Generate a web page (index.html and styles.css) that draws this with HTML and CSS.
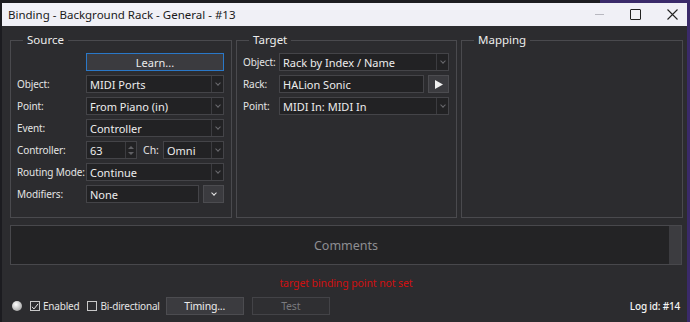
FILE: index.html
```html
<!DOCTYPE html>
<html>
<head>
    <meta charset="utf-8" />
    <title>Binding</title>
    <link rel="stylesheet" href="styles.css">
</head>
<body>
    <div class="window">
        <div class="titlebar">
            <span class="title">Binding - Background Rack - General - #13</span>
            <div class="winbtns">
                <span class="wb wbMin"></span>
                <span class="wb wbMax"></span>
                <span class="wb wbClose">
                    <svg width="11" height="11" viewBox="0 0 11 11"><path d="M0.5 0.5L10.5 10.5M10.5 0.5L0.5 10.5" stroke="#222" stroke-width="1.1" /></svg>
                </span>
            </div>
        </div>

        <div class="content">
            <div class="groups">
                <fieldset class="group">
                    <legend>Source</legend>
                    <div class="rows">
                        <div class="row">
                            <span class="lbl"></span>
                            <div class="btn learn">Learn...</div>
                        </div>
                        <div class="row">
                            <span class="lbl">Object:</span>
                            <div class="combo"><span class="val">MIDI Ports</span><span class="drop"></span></div>
                        </div>
                        <div class="row">
                            <span class="lbl">Point:</span>
                            <div class="combo"><span class="val">From Piano (in)</span><span class="drop"></span></div>
                        </div>
                        <div class="row">
                            <span class="lbl">Event:</span>
                            <div class="combo"><span class="val">Controller</span><span class="drop"></span></div>
                        </div>
                        <div class="row">
                            <span class="lbl">Controller:</span>
                            <div class="spin"><span class="val">63</span><span class="spinArrows"><span class="up"></span><span class="down"></span></span></div>
                            <span class="chLbl">Ch:</span>
                            <div class="combo"><span class="val">Omni</span><span class="drop"></span></div>
                        </div>
                        <div class="row">
                            <span class="lbl">Routing Mode:</span>
                            <div class="combo"><span class="val">Continue</span><span class="drop"></span></div>
                        </div>
                        <div class="row">
                            <span class="lbl">Modifiers:</span>
                            <div class="input"><span class="val">None</span></div>
                            <div class="btn smallBtn"><span class="chev"></span></div>
                        </div>
                    </div>
                </fieldset>

                <fieldset class="group">
                    <legend>Target</legend>
                    <div class="rows">
                        <div class="row">
                            <span class="lbl lblT">Object:</span>
                            <div class="combo"><span class="val">Rack by Index / Name</span><span class="drop"></span></div>
                        </div>
                        <div class="row">
                            <span class="lbl lblT">Rack:</span>
                            <div class="input"><span class="val">HALion Sonic</span></div>
                            <div class="btn smallBtn">
                                <svg width="8" height="9" viewBox="0 0 8 9"><path d="M0 0L8 4.5L0 9Z" fill="#f0f0f0" /></svg>
                            </div>
                        </div>
                        <div class="row">
                            <span class="lbl lblT">Point:</span>
                            <div class="combo"><span class="val">MIDI In: MIDI In</span><span class="drop"></span></div>
                        </div>
                    </div>
                </fieldset>

                <fieldset class="group">
                    <legend>Mapping</legend>
                </fieldset>
            </div>

            <div class="comments">
                <span class="commentsText">Comments</span>
                <span class="scrollbar"></span>
            </div>

            <div class="error">target binding point not set</div>

            <div class="bottom">
                <span class="led"></span>
                <label class="check">
                    <span class="box">
                        <svg width="9" height="9" viewBox="0 0 9 9"><path d="M1 4.8L3.4 7.2L8 1.5" fill="none" stroke="#eee" stroke-width="1.1" /></svg>
                    </span>
                    Enabled
                </label>
                <label class="check checkLast"><span class="box"></span>Bi-directional</label>
                <div class="btn wideBtn">Timing...</div>
                <div class="btn wideBtn disabled">Test</div>
                <span class="logid">Log id: #14</span>
            </div>
        </div>
    </div>
</body>
</html>
```

FILE: styles.css
```css
* {
    margin: 0;
    padding: 0;
    box-sizing: border-box;
}

body {
    width: 690px;
    height: 322px;
    overflow: hidden;
    background: linear-gradient(to right, #1c1c20 0, #1c1c20 600px, #3a2a6a 600px);
    font-family: "Noto Sans", "Open Sans", sans-serif;
    font-size: 11px;
    color: #e4e4e4;
    padding: 3px 3px 0 2px;
}

.window {
    width: 685px;
    height: 319px;
    background: #2c2c2f;
    display: flex;
    flex-direction: column;
}

.titlebar {
    height: 23px;
    background: #f0f0f6;
    color: #1a1a1a;
    display: flex;
    align-items: center;
    padding-left: 6px;
    font-size: 11.5px;
}

.title {
    flex: 1;
}

.winbtns {
    display: flex;
    align-items: center;
}

.wb {
    width: 30px;
    height: 23px;
    display: flex;
    align-items: center;
    justify-content: center;
}

.wbMax {
    width: 43px;
}

.wbMin::before {
    content: "";
    width: 9px;
    height: 1px;
    background: #b8b8c0;
}

.wbMax::before {
    content: "";
    width: 9px;
    height: 9px;
    border: 1px solid #222;
    border-radius: 1px;
}

.content {
    flex: 1;
    padding: 7px 5px 0 8px;
    display: flex;
    flex-direction: column;
}

.groups {
    display: grid;
    grid-template-columns: 222px 221px 222px;
    gap: 4px;
    height: 185px;
}

.group {
    border: 1px solid #4a4a4e;
    padding: 0 7px 0 6px;
    min-width: 0;
}

.group legend {
    padding: 0 4px;
    margin-left: 6px;
    font-size: 11.5px;
    color: #ececec;
    line-height: 14px;
}

.rows {
    display: flex;
    flex-direction: column;
    gap: 4px;
    padding-top: 6px;
}

.row {
    display: flex;
    align-items: center;
    height: 18px;
}

.lbl {
    width: 69px;
    flex: none;
    white-space: nowrap;
    font-size: 10px;
    letter-spacing: -0.1px;
}

.lblT {
    width: 36px;
}

.combo, .input, .spin {
    flex: 1;
    height: 18px;
    background: #222224;
    border: 1px solid #444448;
    display: flex;
    align-items: center;
    min-width: 0;
}

.val {
    flex: 1;
    padding-left: 3px;
    white-space: nowrap;
    color: #ededed;
}

.drop {
    width: 12px;
    height: 100%;
    border-left: 1px solid #3c3c40;
    display: flex;
    align-items: center;
    justify-content: center;
}

.drop::before {
    content: "";
    width: 3px;
    height: 3px;
    border-right: 1px solid #6a6a6e;
    border-bottom: 1px solid #6a6a6e;
    transform: rotate(45deg);
    margin-top: -2px;
}

.spin {
    flex: none;
    width: 51px;
}

.spinArrows {
    width: 11px;
    height: 100%;
    border-left: 1px solid #3c3c40;
    display: flex;
    flex-direction: column;
    align-items: center;
    justify-content: center;
    gap: 3px;
}

.up, .down {
    width: 0;
    height: 0;
    border-left: 3px solid transparent;
    border-right: 3px solid transparent;
}

.up {
    border-bottom: 3px solid #606064;
}

.down {
    border-top: 3px solid #606064;
}

.chLbl {
    margin: 0 4px 0 6px;
    font-size: 10.5px;
}

.btn {
    background: #3b3b3f;
    border: 1px solid #4c4c50;
    display: flex;
    align-items: center;
    justify-content: center;
    color: #ececec;
}

.learn {
    flex: 1;
    height: 18px;
    border-color: #2a78c8;
}

.smallBtn {
    width: 21px;
    height: 18px;
    flex: none;
    margin-left: 4px;
}

.chev {
    width: 4px;
    height: 4px;
    border-right: 1px solid #e8e8e8;
    border-bottom: 1px solid #e8e8e8;
    transform: rotate(45deg);
    margin-top: -2px;
}

.comments {
    margin-top: 7px;
    height: 40px;
    width: 672px;
    background: #232325;
    border: 1px solid #48484c;
    display: flex;
    align-items: center;
}

.commentsText {
    flex: 1;
    text-align: center;
    font-size: 12.5px;
    color: #8e8e92;
    padding-left: 12px;
}

.scrollbar {
    width: 12px;
    height: 100%;
    background: #3c3c40;
}

.error {
    margin-top: 11px;
    text-align: center;
    color: #d01010;
    font-size: 10.5px;
    letter-spacing: -0.1px;
    width: 672px;
}

.bottom {
    margin-top: 7px;
    display: flex;
    align-items: center;
    height: 18px;
    width: 673px;
    padding-left: 2px;
    font-size: 10px;
    letter-spacing: -0.2px;
}

.led {
    width: 10px;
    height: 10px;
    border-radius: 50%;
    background: radial-gradient(circle at 40% 35%, #ffffff 0, #d8d8d8 35%, #8c8c8c 100%);
    margin-right: 8px;
}

.check {
    display: flex;
    align-items: center;
    gap: 3px;
    margin-right: 8px;
}

.checkLast {
    margin-right: 6px;
}

.box {
    width: 10px;
    height: 10px;
    border: 1px solid #c8c8c8;
    display: flex;
    align-items: center;
    justify-content: center;
}

.wideBtn {
    width: 78px;
    height: 18px;
    margin-right: 8px;
    font-size: 10.5px;
}

.disabled {
    background: #2f2f32;
    border-color: #434347;
    color: #7a7a7e;
}

.logid {
    margin-left: auto;
    margin-right: 3px;
    color: #f4f4f4;
    font-size: 10px;
    font-weight: 500;
    letter-spacing: -0.2px;
}
```
